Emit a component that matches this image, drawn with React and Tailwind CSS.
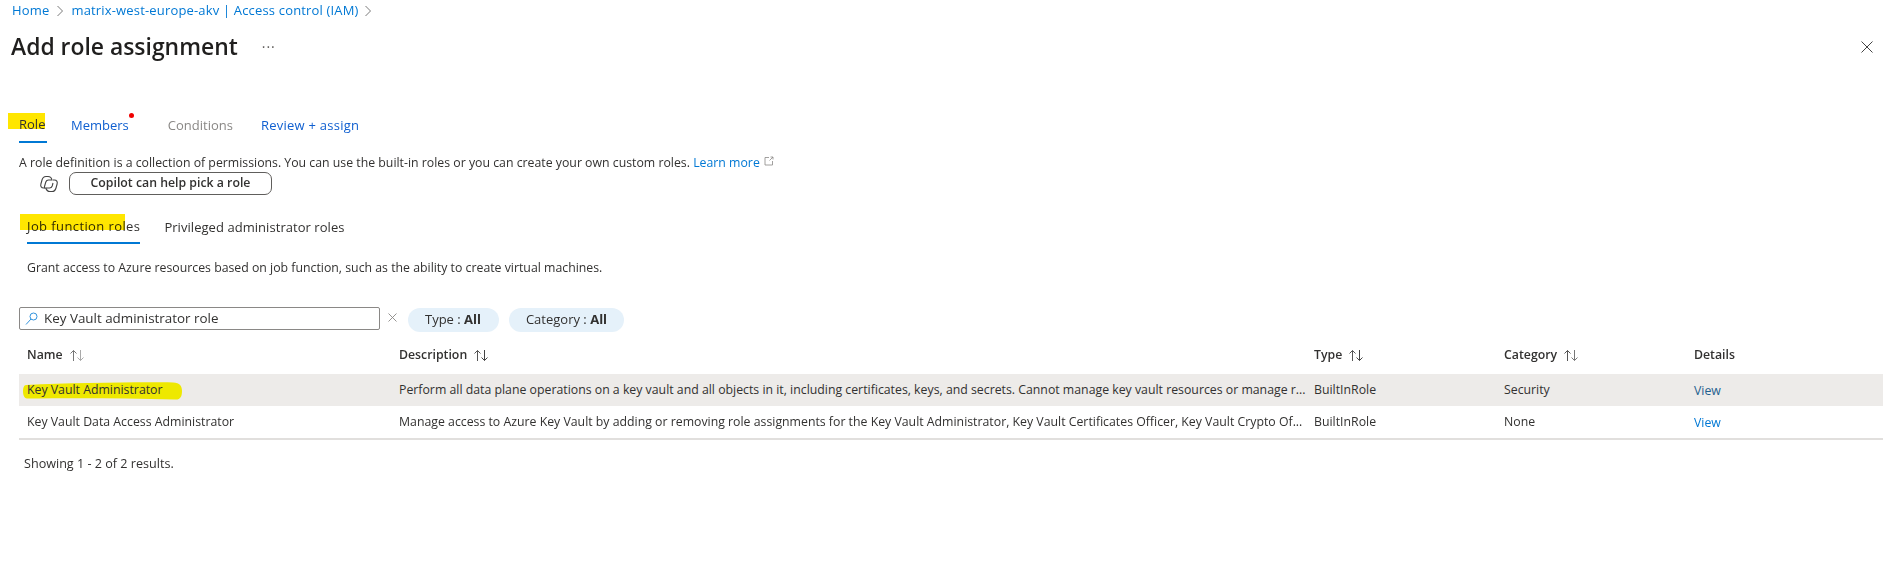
import React from "react";

const Chevron = ({ className = "" }) => (
  <svg width="8" height="12" viewBox="0 0 8 12" fill="none" stroke="#7a7a7a" strokeWidth="1" className={className}>
    <path d="M1.5 1 L6.5 6 L1.5 11" />
  </svg>
);

const Sort = ({ up = "#555", down = "#999" }) => (
  <svg width="16" height="13" viewBox="0 0 16 13" fill="none" strokeWidth="1" className="ml-[6px]">
    <path d="M4.5 12V1.5M1.5 4.5l3-3 3 3" stroke={up} />
    <path d="M11.5 1v10.5M8.5 8.5l3 3 3-3" stroke={down} />
  </svg>
);

const Copilot = () => (
  <svg width="20" height="20" viewBox="0 0 20 20" fill="none" stroke="#444" strokeWidth="1.1">
    <path d="M9 2.5H7C4.8 2.5 3.7 3.5 3 6L1.9 10C1.2 12.5 2.5 14 4.6 14H6" />
    <path d="M11 17.5H13C15.2 17.5 16.3 16.5 17 14L18.1 10C18.8 7.5 17.5 6 15.4 6H14" />
    <path d="M9 2.5C11.5 2.5 12.6 4 13 6H9.5C8 6 7.2 6.8 6.8 8L5.5 12.5C5.2 13.5 5.5 14 6 14H10.5C12 14 12.8 13.2 13.2 12L14 9" />
    <path d="M6.8 14C7.4 16 8.5 17.5 11 17.5" />
  </svg>
);

const Mark = ({ className }) => (
  <span className={`absolute mix-blend-multiply ${className}`} />
);

const Cols = ({ children, className = "" }) => (
  <div className={`grid grid-cols-[372px_915px_190px_190px_1fr] items-center ${className}`}>{children}</div>
);

const Head = ({ label, up, down }) => (
  <div className="flex items-center pb-[5px] pl-2 font-semibold text-[#323130]">
    <span>{label}</span>
    {up && <Sort up={up} down={down} />}
  </div>
);

const rows = [
  {
    name: "Key Vault Administrator",
    desc: "Perform all data plane operations on a key vault and all objects in it, including certificates, keys, and secrets. Cannot manage key vault resources or manage r...",
    cat: "Security",
    bg: "bg-[#edebe9]",
    view: "text-[#1f5f8f]",
    h: "h-8",
  },
  {
    name: "Key Vault Data Access Administrator",
    desc: "Manage access to Azure Key Vault by adding or removing role assignments for the Key Vault Administrator, Key Vault Certificates Officer, Key Vault Crypto Of...",
    cat: "None",
    bg: "",
    view: "text-[#0078d4]",
    h: "h-[34px] border-b-2 border-[#e1dfdd]",
  },
];

export default function App() {
  return (
    <div className="relative h-[571px] w-[1895px] overflow-hidden bg-white font-['Open_Sans',sans-serif] text-[12.3px] text-[#323130]">
      <nav className="flex h-[22px] items-center pl-3 text-[13px] tracking-[0.17px] text-[#0078d4]">
        <span>Home</span>
        <Chevron className="mx-[7px]" />
        <span>matrix-west-europe-akv | Access control (IAM)</span>
        <Chevron className="ml-[5px]" />
      </nav>

      <header className="flex h-[50px] items-center justify-between pl-[11px] pr-[22px]">
        <div className="flex items-center">
          <h1 className="text-[22.9px] font-semibold leading-none text-[#201f1e]">Add role assignment</h1>
          <span className="ml-[24px] -mt-2 text-[14px] leading-none tracking-[1px] text-[#605e5c]">...</span>
        </div>
        <svg width="12" height="12" viewBox="0 0 12 12" stroke="#444" strokeWidth="1">
          <path d="M0.5 0.5L11.5 11.5M11.5 0.5L0.5 11.5" />
        </svg>
      </header>

      <div className="relative ml-[19px] mt-[38px] flex h-[33px] gap-6 text-[13px]">
        <Mark className="left-[-11px] top-[3px] h-4 w-[37px] bg-[#ffe600]" />
        <div className="relative flex h-[33px] w-[28px] items-center border-b-[2px] border-[#0078d4] pb-px text-[#323130]">Role</div>
        <div className="relative flex h-[33px] items-center pb-px text-[#0f5fd0]">
          Members
          <span className="absolute right-[-5px] top-[3px] h-[5px] w-[5px] rounded-full bg-[#f00000]" />
        </div>
        <div className="ml-[15px] flex h-[33px] items-center pb-px text-[#8a8886]">Conditions</div>
        <div className="ml-[4px] flex h-[33px] items-center pb-px tracking-[0.25px] text-[#0f5fd0]">Review + assign</div>
      </div>

      <p className="ml-[19px] mt-[12px] leading-[16px]">
        A role definition is a collection of permissions. You can use the built-in roles or you can create your own custom roles.{" "}
        <span className="text-[#0078d4]">Learn more</span>
        <svg width="10" height="10" viewBox="0 0 10 10" fill="none" stroke="#8a8886" strokeWidth="0.8" className="ml-1 inline-block align-[1px]">
          <path d="M5 1.5H1v7.5h7.5V5M5.5 4.5L9 1M6.5 1H9v2.5" />
        </svg>
      </p>

      <div className="ml-[39px] mt-px flex items-center gap-[10px]">
        <Copilot />
        <button className="h-[23px] w-[203px] rounded-[7px] border border-[#605e5c] text-[12.3px] font-semibold text-[#323130]">
          Copilot can help pick a role
        </button>
      </div>

      <div className="relative ml-[27px] mt-[18px] flex h-[31px] items-center gap-6 text-[13px]">
        <Mark className="left-[-7px] top-[1px] h-4 w-[105px] bg-[#ffe600]" />
        <div className="flex h-[31px] items-center border-b-[2px] border-[#0078d4] pb-[2px] font-medium tracking-[0.4px] text-[#323130]">Job function roles</div>
        <div className="flex h-[31px] items-center pb-[2px] tracking-[0.05px] text-[#323130]">Privileged administrator roles</div>
      </div>

      <p className="ml-[27px] mt-[16px] leading-[16px]">
        Grant access to Azure resources based on job function, such as the ability to create virtual machines.
      </p>

      <div className="ml-[19px] mt-[32px] flex items-center">
        <div className="-mt-[3px] flex h-[23px] w-[361px] items-center rounded-[2px] border border-[#8a8886] pl-[5px]">
          <svg width="13" height="13" viewBox="0 0 13 13" fill="none" stroke="#0078d4" strokeWidth="0.8">
            <circle cx="8.5" cy="4.5" r="3.5" />
            <path d="M6 7L1 12.5" />
          </svg>
          <span className="ml-[6px] text-[13.4px]">Key Vault administrator role</span>
        </div>
        <svg width="9" height="9" viewBox="0 0 9 9" stroke="#8a8886" strokeWidth="0.9" className="ml-[8px] mt-[-6px]">
          <path d="M0.5 0.5L8.5 8.5M8.5 0.5L0.5 8.5" />
        </svg>
        <div className="ml-[11px] flex h-6 w-[91px] items-center justify-center rounded-full bg-[#e5f1fa] pr-px text-[13px]">
          Type :&nbsp;<b className="font-bold">All</b>
        </div>
        <div className="ml-[10px] flex h-6 w-[115px] items-center justify-center rounded-full bg-[#e5f1fa] text-[13px]">
          Category :&nbsp;<b className="font-bold">All</b>
        </div>
      </div>

      <div className="ml-[19px] mr-[12px] mt-[10px]">
        <Cols className="h-[32px]">
          <Head label="Name" up="#777" down="#aaa" />
          <Head label="Description" up="#555" down="#444" />
          <Head label="Type" up="#555" down="#444" />
          <Head label="Category" up="#555" down="#777" />
          <Head label="Details" />
        </Cols>
        {rows.map((r, i) => (
          <Cols key={r.name} className={`relative ${r.h} ${r.bg}`}>
            {i === 0 && (
              <svg width="160" height="18" viewBox="0 0 160 18" className="absolute left-[4px] top-[8px]">
                <path d="M3 3C50 1 110 0 150 0.5 157 1 159 4 159 9 159 15 157 18 152 17.5 100 16 50 16 4 16.5 1 16 0 13 0 9 0 6 1 3 3 3Z" fill="#eee800" />
              </svg>
            )}
            <div className="relative pl-2">{r.name}</div>
            <div className="whitespace-nowrap pl-2">{r.desc}</div>
            <div className="pl-2">BuiltInRole</div>
            <div className="pl-2">{r.cat}</div>
            <div className={`pl-2 pt-[2px] ${r.view}`}>View</div>
          </Cols>
        ))}
      </div>

      <p className="ml-[24px] mt-[16px] text-[12.6px] leading-[16px]">Showing 1 - 2 of 2 results.</p>
    </div>
  );
}
